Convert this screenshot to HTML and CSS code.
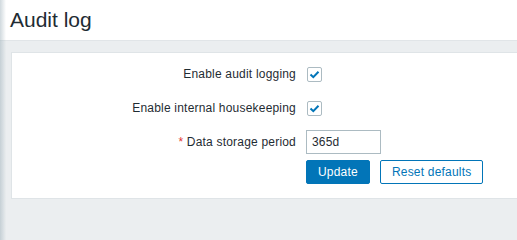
FILE: index.html
```html
<!DOCTYPE html>
<html lang="en">
<head>
    <meta charset="UTF-8">
    <title>Audit log</title>
    <link rel="stylesheet" href="styles.css">
</head>
<body>
    <header class="page-header">
        <h1 class="page-title">Audit log</h1>
    </header>

    <main class="wrapper">
        <form class="form-container">
            <ul class="form-list">
                <li class="form-row">
                    <label class="form-label" for="auditlog_enabled">Enable audit logging</label>
                    <div class="form-field">
                        <span class="checkbox" id="auditlog_enabled">
                            <svg width="11" height="9" viewBox="0 0 11 9"><polyline points="1.5,4.5 4.3,7.2 9.5,1.8" fill="none" stroke="#0275b8" stroke-width="2"/></svg>
                        </span>
                    </div>
                </li>
                <li class="form-row">
                    <label class="form-label" for="hk_audit_mode">Enable internal housekeeping</label>
                    <div class="form-field">
                        <span class="checkbox" id="hk_audit_mode">
                            <svg width="11" height="9" viewBox="0 0 11 9"><polyline points="1.5,4.5 4.3,7.2 9.5,1.8" fill="none" stroke="#0275b8" stroke-width="2"/></svg>
                        </span>
                    </div>
                </li>
                <li class="form-row">
                    <label class="form-label" for="hk_audit"><span class="asterisk">*</span> Data storage period</label>
                    <div class="form-field">
                        <input type="text" id="hk_audit" class="text-input" value="365d">
                    </div>
                </li>
                <li class="form-row form-actions">
                    <div class="form-label"></div>
                    <div class="form-field">
                        <button type="button" class="btn btn-primary">Update</button>
                        <button type="button" class="btn btn-alt">Reset defaults</button>
                    </div>
                </li>
            </ul>
        </form>
    </main>
</body>
</html>
```

FILE: styles.css
```css
body {
    font-family: "Liberation Sans", Arial, sans-serif;
    font-size: 12px;
    letter-spacing: 0.2px;
    margin: 0;
    padding: 0;
    background-color: #ebeef0;
    color: #1f2c33;
    overflow: hidden;
    height: 240px;
}
/* ombre du menu latéral */
body::before {
    content: "";
    position: fixed;
    top: 0;
    left: 0;
    bottom: 0;
    width: 6px;
    background: linear-gradient(to right, rgba(150, 170, 180, 0.45), rgba(150, 170, 180, 0));
}
.page-header {
    background: #fff;
    height: 40px;
    border-bottom: 1px solid #e1e5e8;
    display: flex;
    align-items: center;
    padding: 0 10px;
}
.page-title {
    margin: 0;
    font-size: 21px;
    font-weight: normal;
    letter-spacing: 0;
    color: #1f2c33;
}
.wrapper {
    padding: 11px 0 0 11px;
}
.form-container {
    background: #fff;
    border: 1px solid #dfe4e7;
    margin-right: -20px;
    padding: 4px 0 14px;
}
.form-list {
    list-style: none;
    margin: 0;
    padding: 0;
}
.form-row {
    display: flex;
    align-items: center;
    padding: 5px 0;
    height: 24px;
}
.form-actions {
    padding: 1px 0 0;
}
.form-label {
    width: 284px;
    padding-right: 10px;
    text-align: right;
    flex-shrink: 0;
}
.asterisk {
    color: #e33734;
}
.form-field {
    display: flex;
    align-items: center;
    gap: 10px;
}
.checkbox {
    width: 13px;
    height: 13px;
    border: 1px solid #acbbc2;
    border-radius: 2px;
    margin-left: 1px;
    display: flex;
    align-items: center;
    justify-content: center;
}
.text-input {
    box-sizing: border-box;
    width: 75px;
    height: 24px;
    border: 1px solid #acbbc2;
    padding: 0 5px;
    margin: 0;
    font-family: inherit;
    font-size: 12px;
    letter-spacing: 0.2px;
    color: #1f2c33;
    outline: none;
}
.btn {
    box-sizing: border-box;
    height: 24px;
    padding: 0 11px;
    margin: 0;
    border: 1px solid #0275b8;
    border-radius: 2px;
    font-family: inherit;
    font-size: 12px;
    letter-spacing: 0.2px;
    cursor: pointer;
}
.btn-primary {
    background: #0275b8;
    color: #fff;
}
.btn-alt {
    background: #fff;
    color: #0275b8;
}
```
